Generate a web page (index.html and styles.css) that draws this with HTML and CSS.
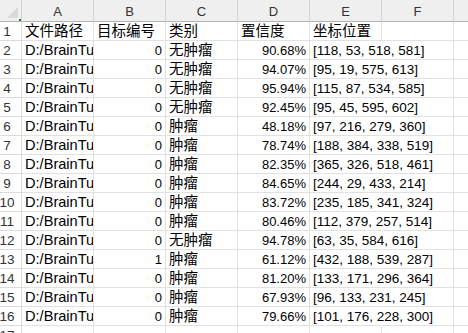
FILE: index.html
```html
<!DOCTYPE html>
<html lang="zh">
<head>
<meta charset="utf-8">
<title>Sheet</title>
<link rel="stylesheet" href="styles.css">
</head>
<body>
<div class="sheet">
  <div class="corner"><span class="tri"></span><span class="dot"></span></div>
  <div class="colhead">A</div>
  <div class="colhead">B</div>
  <div class="colhead">C</div>
  <div class="colhead">D</div>
  <div class="colhead">E</div>
  <div class="colhead">F</div>
  <div class="colhead last"></div>

  <div class="rowhead">1</div>
  <div class="cell cjk">文件路径</div>
  <div class="cell cjk">目标编号</div>
  <div class="cell cjk">类别</div>
  <div class="cell cjk">置信度</div>
  <div class="cell cjk">坐标位置</div>
  <div class="cell"></div>
  <div class="cell last"></div>

  <div class="rowhead">2</div><div class="cell path">D:/BrainTumor</div><div class="cell num">0</div><div class="cell cjk">无肿瘤</div><div class="cell num">90.68%</div><div class="cell box">[118, 53, 518, 581]</div><div class="cell"></div><div class="cell last"></div>
  <div class="rowhead">3</div><div class="cell path">D:/BrainTumor</div><div class="cell num">0</div><div class="cell cjk">无肿瘤</div><div class="cell num">94.07%</div><div class="cell box">[95, 19, 575, 613]</div><div class="cell"></div><div class="cell last"></div>
  <div class="rowhead">4</div><div class="cell path">D:/BrainTumor</div><div class="cell num">0</div><div class="cell cjk">无肿瘤</div><div class="cell num">95.94%</div><div class="cell box">[115, 87, 534, 585]</div><div class="cell"></div><div class="cell last"></div>
  <div class="rowhead">5</div><div class="cell path">D:/BrainTumor</div><div class="cell num">0</div><div class="cell cjk">无肿瘤</div><div class="cell num">92.45%</div><div class="cell box">[95, 45, 595, 602]</div><div class="cell"></div><div class="cell last"></div>
  <div class="rowhead">6</div><div class="cell path">D:/BrainTumor</div><div class="cell num">0</div><div class="cell cjk">肿瘤</div><div class="cell num">48.18%</div><div class="cell box">[97, 216, 279, 360]</div><div class="cell"></div><div class="cell last"></div>
  <div class="rowhead">7</div><div class="cell path">D:/BrainTumor</div><div class="cell num">0</div><div class="cell cjk">肿瘤</div><div class="cell num">78.74%</div><div class="cell box">[188, 384, 338, 519]</div><div class="cell"></div><div class="cell last"></div>
  <div class="rowhead">8</div><div class="cell path">D:/BrainTumor</div><div class="cell num">0</div><div class="cell cjk">肿瘤</div><div class="cell num">82.35%</div><div class="cell box">[365, 326, 518, 461]</div><div class="cell"></div><div class="cell last"></div>
  <div class="rowhead">9</div><div class="cell path">D:/BrainTumor</div><div class="cell num">0</div><div class="cell cjk">肿瘤</div><div class="cell num">84.65%</div><div class="cell box">[244, 29, 433, 214]</div><div class="cell"></div><div class="cell last"></div>
  <div class="rowhead">10</div><div class="cell path">D:/BrainTumor</div><div class="cell num">0</div><div class="cell cjk">肿瘤</div><div class="cell num">83.72%</div><div class="cell box">[235, 185, 341, 324]</div><div class="cell"></div><div class="cell last"></div>
  <div class="rowhead">11</div><div class="cell path">D:/BrainTumor</div><div class="cell num">0</div><div class="cell cjk">肿瘤</div><div class="cell num">80.46%</div><div class="cell box">[112, 379, 257, 514]</div><div class="cell"></div><div class="cell last"></div>
  <div class="rowhead">12</div><div class="cell path">D:/BrainTumor</div><div class="cell num">0</div><div class="cell cjk">无肿瘤</div><div class="cell num">94.78%</div><div class="cell box">[63, 35, 584, 616]</div><div class="cell"></div><div class="cell last"></div>
  <div class="rowhead">13</div><div class="cell path">D:/BrainTumor</div><div class="cell num">1</div><div class="cell cjk">肿瘤</div><div class="cell num">61.12%</div><div class="cell box">[432, 188, 539, 287]</div><div class="cell"></div><div class="cell last"></div>
  <div class="rowhead">14</div><div class="cell path">D:/BrainTumor</div><div class="cell num">0</div><div class="cell cjk">肿瘤</div><div class="cell num">81.20%</div><div class="cell box">[133, 171, 296, 364]</div><div class="cell"></div><div class="cell last"></div>
  <div class="rowhead">15</div><div class="cell path">D:/BrainTumor</div><div class="cell num">0</div><div class="cell cjk">肿瘤</div><div class="cell num">67.93%</div><div class="cell box">[96, 133, 231, 245]</div><div class="cell"></div><div class="cell last"></div>
  <div class="rowhead">16</div><div class="cell path">D:/BrainTumor</div><div class="cell num">0</div><div class="cell cjk">肿瘤</div><div class="cell num">79.66%</div><div class="cell box">[101, 176, 228, 300]</div><div class="cell"></div><div class="cell last"></div>
  <div class="rowhead">17</div><div class="cell"></div><div class="cell"></div><div class="cell"></div><div class="cell"></div><div class="cell"></div><div class="cell"></div><div class="cell last"></div>
</div>
</body>
</html>
```

FILE: styles.css
```css
html, body {
  margin: 0;
  padding: 0;
  background: #ffffff;
  overflow: hidden;
}

.sheet {
  display: grid;
  grid-template-columns: 22px repeat(6, 72px) 1fr;
  grid-template-rows: 22px repeat(17, 19px);
  width: 100%;
  font-family: "Liberation Sans", "Noto Sans CJK SC", sans-serif;
  color: #000000;
}

.corner {
  position: relative;
  background: #efefef;
  border-right: 1px solid #d4d4d4;
  border-bottom: 1px solid #b4b4b4;
  box-sizing: border-box;
}

.tri {
  position: absolute;
  right: 3px;
  bottom: 3px;
  width: 11px;
  height: 11px;
  background: #d9d9d9;
  clip-path: polygon(100% 0, 100% 100%, 0 100%);
}

.dot {
  position: absolute;
  right: 0;
  bottom: 0;
  width: 2px;
  height: 2px;
  background: #217346;
}

.colhead {
  background: #efefef;
  border-right: 1px solid #d4d4d4;
  border-bottom: 1px solid #b4b4b4;
  box-sizing: border-box;
  display: flex;
  align-items: center;
  justify-content: center;
  font-size: 13px;
  color: #333333;
  padding-top: 1px;
}

.rowhead {
  border-right: 1px solid #dadada;
  border-bottom: 1px solid #dadada;
  box-sizing: border-box;
  display: flex;
  align-items: flex-end;
  justify-content: center;
  padding-right: 7px;
  padding-bottom: 1px;
  font-size: 13.5px;
  line-height: 15px;
  color: #333333;
  white-space: nowrap;
  overflow: visible;
}

.cell {
  border-right: 1px solid #e1e1e1;
  border-bottom: 1px solid #e1e1e1;
  box-sizing: border-box;
  display: flex;
  align-items: flex-end;
  padding: 0 2px 1px 3px;
  font-size: 13px;
  line-height: 15px;
  white-space: nowrap;
  min-width: 0;
}

.cell.last {
  border-right: none;
}

.colhead.last {
  border-right: none;
}

.cjk {
  font-size: 14.5px;
  line-height: 17px;
  padding-bottom: 0;
}

.path {
  overflow: hidden;
  font-size: 14.6px;
}

.num {
  justify-content: flex-end;
  padding-right: 3px;
}

.box {
  overflow: visible;
  font-size: 13.5px;
  border-right-color: transparent;
}
```
